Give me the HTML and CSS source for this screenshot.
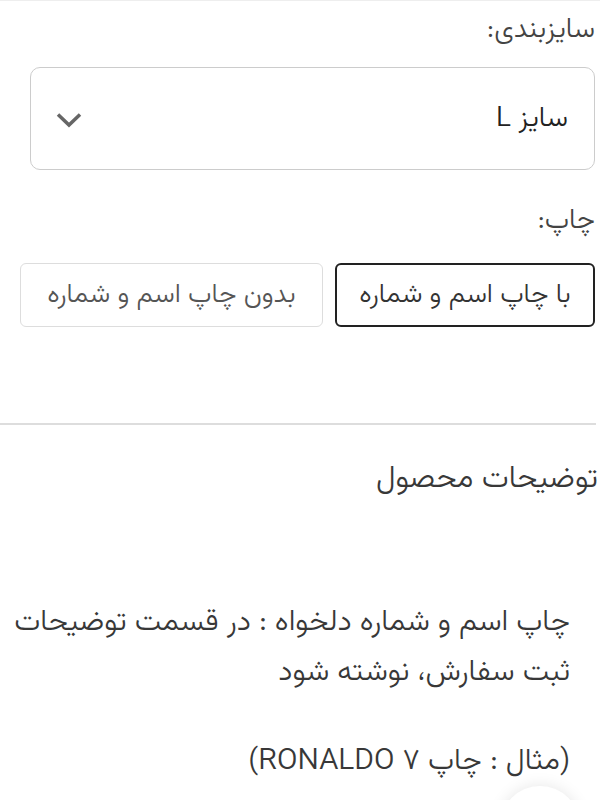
FILE: index.html
```html
<!DOCTYPE html>
<html lang="fa" dir="rtl">
<head>
    <meta charset="UTF-8">
    <meta name="viewport" content="width=device-width, initial-scale=1.0">
    <title>توضیحات محصول</title>
    <link rel="stylesheet" href="styles.css">
</head>
<body>
    <div class="product-options">
        <!-- Size -->
        <label class="option-label">سایزبندی:</label>
        <div class="size-select">
            <span class="size-value">سایز L</span>
            <svg class="chevron" width="26" height="16" viewBox="0 0 26 16">
                <path d="M2 2.5 L13 13 L24 2.5" fill="none" stroke="#666" stroke-width="3.5"/>
            </svg>
        </div>

        <!-- Print -->
        <label class="option-label print-label">چاپ:</label>
        <div class="print-choices">
            <button class="choice selected">با چاپ اسم و شماره</button>
            <button class="choice">بدون چاپ اسم و شماره</button>
        </div>
    </div>

    <hr class="divider">

    <div class="description">
        <h3 class="desc-title">توضیحات محصول</h3>
        <p class="desc-text">چاپ اسم و شماره دلخواه : در قسمت توضیحات<br>ثبت سفارش، نوشته شود</p>
        <p class="desc-text">(مثال : چاپ ۷ RONALDO)</p>
    </div>

    <div class="float-shadow"></div>
</body>
</html>
```

FILE: styles.css
```css
body {
    margin: 0;
    direction: rtl;
    font-family: "Vazirmatn", "Noto Sans Arabic", "DejaVu Sans", Roboto, sans-serif;
    font-weight: 300;
    color: #383838;
    background-color: #fff;
    border-top: 1px solid #eee;
    overflow: hidden;
}

.product-options {
    padding: 0 5px 0 0;
}

.option-label {
    display: block;
    font-size: 28px;
    color: #444;
    line-height: 30px;
    padding-top: 14px;
}

.size-select {
    margin: 22px 0 0 30px;
    height: 101px;
    border: 1px solid #ccc;
    border-radius: 10px;
    display: flex;
    align-items: center;
    justify-content: space-between;
    padding: 0 26px 0 25px;
}

.size-value {
    font-size: 28px;
    color: #222;
}

.chevron {
    display: block;
    margin-top: 3px;
}

.print-label {
    padding-top: 36px;
}

.print-choices {
    display: flex;
    gap: 12px;
    margin-top: 27px;
    margin-left: 20px;
}

.choice {
    font-family: inherit;
    font-weight: 300;
    background-color: #fff;
    height: 64px;
    border: 1px solid #ddd;
    border-radius: 6px;
    padding: 0 10px;
    font-size: 27px;
    color: #555;
    cursor: pointer;
    flex: 1;
}

.choice.selected {
    border: 2px solid #222;
    color: #333;
    flex: 0 0 260px;
}

.divider {
    border: none;
    border-top: 2px solid #ddd;
    margin: 96px 4px 0 0;
}

.description {
    padding: 0 30px 0 0;
}

.desc-title {
    font-size: 31px;
    font-weight: 300;
    color: #383838;
    margin: 37px -28px 0 0;
    line-height: 36px;
}

.desc-text {
    font-size: 30px;
    line-height: 50px;
    margin: 0;
    white-space: nowrap;
}

.desc-title + .desc-text {
    margin-top: 100px;
}

.desc-text + .desc-text {
    margin-top: 39px;
}

.float-shadow {
    position: fixed;
    right: 20px;
    bottom: -66px;
    width: 80px;
    height: 80px;
    border-radius: 50%;
    background-color: #fff;
    box-shadow: 0 0 16px rgba(0, 0, 0, 0.1);
}
```
